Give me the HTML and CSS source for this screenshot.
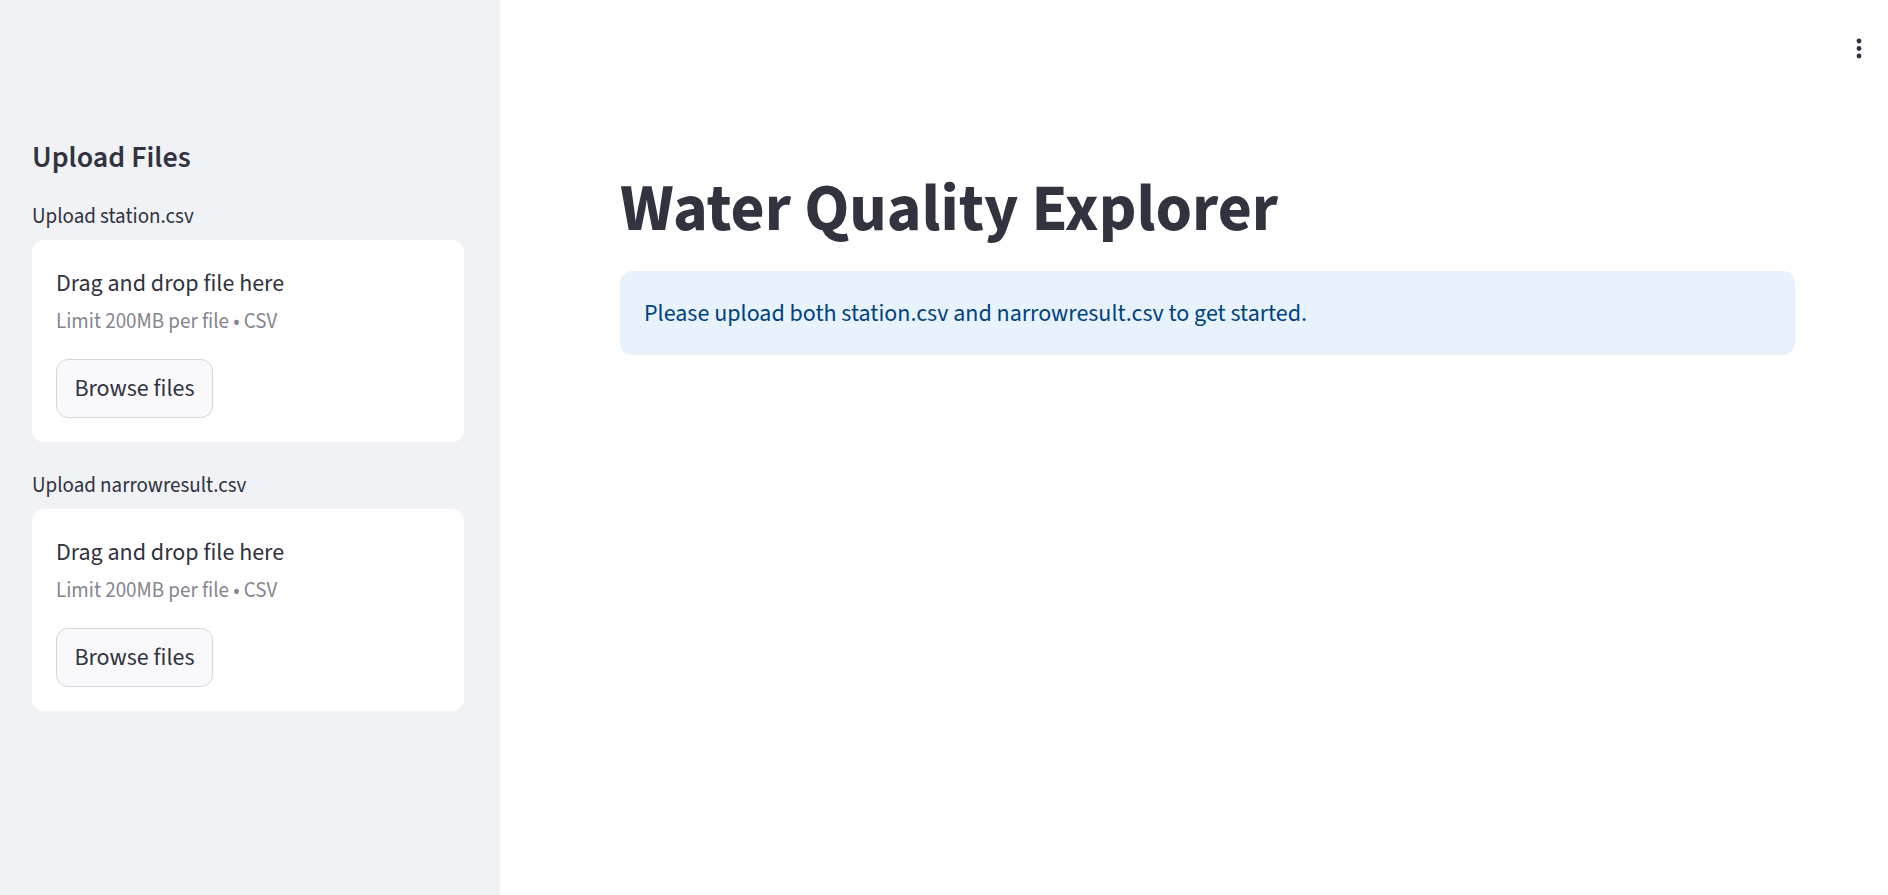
FILE: index.html
```html
<!DOCTYPE html>
<html lang="en">
<head>
<meta charset="utf-8">
<title>Water Quality Explorer</title>
<link rel="stylesheet" href="styles.css">
</head>
<body>
<div class="app">
  <aside class="sidebar">
    <h3 class="side-title">Upload Files</h3>
    <div class="uploader">
      <label class="up-label">Upload station.csv</label>
      <div class="dropzone">
        <div class="dz-title">Drag and drop file here</div>
        <div class="dz-limit">Limit 200MB per file • CSV</div>
        <button class="browse">Browse files</button>
      </div>
    </div>
    <div class="uploader">
      <label class="up-label">Upload narrowresult.csv</label>
      <div class="dropzone">
        <div class="dz-title">Drag and drop file here</div>
        <div class="dz-limit">Limit 200MB per file • CSV</div>
        <button class="browse">Browse files</button>
      </div>
    </div>
  </aside>
  <main class="main">
    <div class="menu">
      <svg width="24" height="24" viewBox="0 0 24 24"><circle cx="12" cy="5" r="2.4" fill="#31333f"/><circle cx="12" cy="12.5" r="2.4" fill="#31333f"/><circle cx="12" cy="20" r="2.4" fill="#31333f"/></svg>
    </div>
    <div class="content">
      <h1 class="title">Water Quality Explorer</h1>
      <div class="info">Please upload both station.csv and narrowresult.csv to get started.</div>
    </div>
  </main>
</div>
</body>
</html>
```
FILE: styles.css
```css
* { box-sizing: border-box; }
html, body { margin: 0; padding: 0; height: 100%; }
body {
  font-family: "Source Sans Pro", "Source Sans 3", Lato, "Noto Sans", sans-serif;
  color: #31333f;
  background: #ffffff;
}
.app { display: flex; height: 100vh; }
.sidebar {
  width: 500px;
  flex: 0 0 500px;
  background: #f0f2f6;
  padding: 138px 36px 0 32px;
  display: flex;
  flex-direction: column;
}
.side-title {
  margin: 0 0 22px 0;
  font-size: 30px;
  line-height: 40px;
  font-weight: 600;
}
.uploader { margin-bottom: 27px; }
.up-label {
  display: block;
  font-size: 21px;
  line-height: 32px;
  margin-bottom: 8px;
}
.dropzone {
  background: #ffffff;
  border-radius: 12px;
  padding: 26px 24px 24px 24px;
  display: flex;
  flex-direction: column;
  align-items: flex-start;
}
.dz-title { font-size: 24px; line-height: 36px; }
.dz-limit { font-size: 21px; line-height: 30px; margin-top: 4px; color: #84868e; }
.browse {
  margin-top: 23px;
  height: 59px;
  width: 157px;
  background: #f9f9fb;
  border: 1.5px solid #d6d7db;
  border-radius: 12px;
  font-family: inherit;
  font-size: 24px;
  color: #31333f;
  padding: 0;
}
.main { flex: 1; position: relative; }
.menu { position: absolute; top: 36px; right: 17px; width: 24px; height: 24px; }
.menu svg { display: block; }
.content { padding: 169px 93px 0 120px; }
.title {
  margin: 0 0 22px 0;
  font-size: 66px;
  line-height: 80px;
  font-weight: 700;
}
.info {
  background: #e8f2fc;
  color: #004280;
  border-radius: 12px;
  padding: 25px 24px 24px 24px;
  font-size: 24px;
  line-height: 35px;
}
```
